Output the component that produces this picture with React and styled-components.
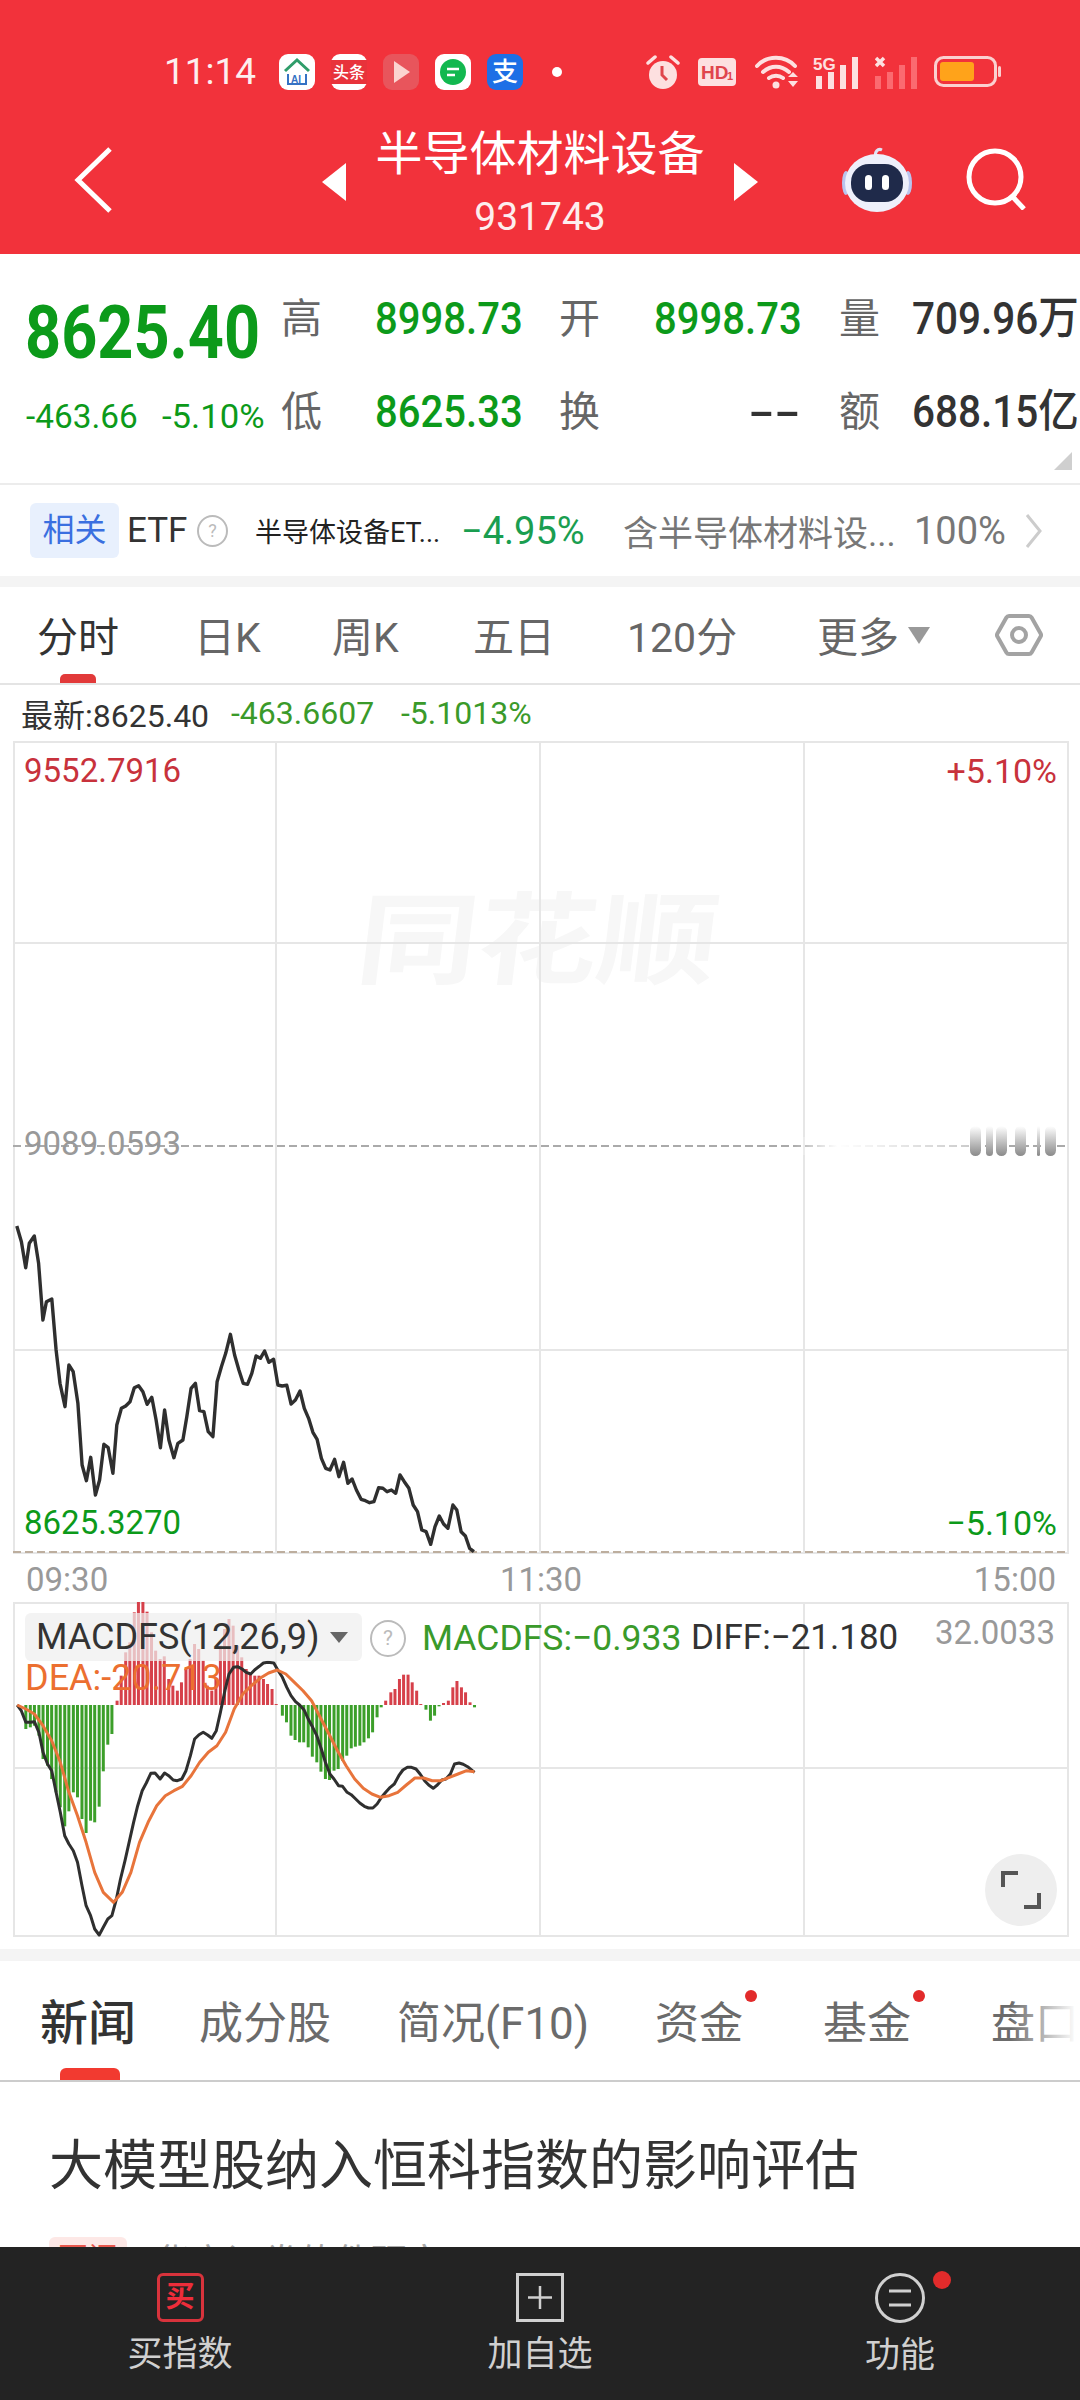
import React from 'react'
import styled, { createGlobalStyle } from 'styled-components'

const Global = createGlobalStyle`
  html, body { margin: 0; padding: 0; background: #fff; }
  * { box-sizing: border-box; }
`

const FONT = `Roboto, "Noto Sans CJK SC", sans-serif`
const GREEN = '#0c9a1a'

const Page = styled.div`
  width: 1080px;
  height: 2400px;
  overflow: hidden;
  display: flex;
  flex-direction: column;
  font-family: ${FONT};
  background: #fff;
  color: #333;
`

const Squeeze = styled.span`
  display: inline-block;
  white-space: nowrap;
  transform: scaleX(${p => p.$x || 1});
  transform-origin: ${p => p.$origin || 'left'} center;
`

// header
const Header = styled.header`
  height: 254px;
  background: #f2323b;
  color: #fff;
  display: flex;
  flex-direction: column;
`
const StatusBar = styled.div`
  height: 91px;
  padding: 53px 0 0 164px;
  display: flex;
  align-items: center;
`
const Time = styled.div`
  width: 115px;
  font-size: 37px;
  line-height: 36px;
  color: #fdeeee;
`
const AppIcons = styled.div`
  display: flex;
  gap: 16px;
  width: 367px;
  align-items: center;
`
const Dot = styled.div`
  width: 10px;
  height: 10px;
  border-radius: 50%;
  background: #fff;
  margin-left: 13px;
`
const SysIcons = styled.div`
  display: flex;
  align-items: center;
`
const NavRow = styled.div`
  flex: 1;
  position: relative;
  display: flex;
  align-items: center;
`
const BackIcon = styled.svg`
  margin-left: 74px;
  margin-top: 14px;
`
const TitleBlock = styled.div`
  position: absolute;
  left: 322px;
  width: 436px;
  top: 34px;
  display: flex;
  align-items: center;
  justify-content: space-between;
`
const TitleArrow = styled.svg`
  margin-top: -4px;
`
const TitleText = styled.div`
  text-align: center;
  flex: 1;
`
const Title = styled.div`
  font-size: 47px;
  line-height: 58px;
  color: #fff;
  white-space: nowrap;
`
const Code = styled.div`
  font-size: 39px;
  line-height: 50px;
  color: #fdeeee;
  margin-top: 9px;
`
const NavRight = styled.div`
  margin-left: auto;
  padding-right: 52px;
  display: flex;
  align-items: center;
  gap: 52px;
  margin-top: 13px;
`

// quote panel
const Quote = styled.section`
  position: relative;
  height: 231px;
  border-bottom: 2px solid #ececec;
  padding: 35px 0 0 25px;
  display: grid;
  grid-template-columns: 256px 94px 184px 95px 185px 73px 168px;
  grid-template-rows: 60px 60px;
  row-gap: 33px;
  align-items: center;
  font-size: 45px;
`
const BigPrice = styled.div`
  font-size: 75px;
  font-weight: 700;
  color: ${GREEN};
  line-height: 60px;
  margin-top: 26px;
`
const Change = styled.div`
  display: flex;
  font-size: 34px;
  color: ${GREEN};
  margin-top: 8px;
  margin-left: 1px;
`
const ChangeCell = styled.div`
  width: ${p => p.$w}px;
`
const QLabel = styled.div`
  font-size: 41px;
  color: #666;
  line-height: 60px;
`
const QValue = styled.div`
  color: ${p => p.$c || GREEN};
  font-weight: 500;
  line-height: 60px;
  white-space: nowrap;
`
const Dash = styled.div`
  color: #333;
  font-weight: 500;
  text-align: right;
  padding-right: 38px;
  line-height: 60px;
`
const Corner = styled.div`
  position: absolute;
  right: 8px;
  bottom: 13px;
  width: 18px;
  height: 18px;
  background: #cfcfcf;
  clip-path: polygon(100% 0, 100% 100%, 0 100%);
`

// etf row
const EtfRow = styled.section`
  height: 91px;
  display: flex;
  align-items: center;
  padding-left: 30px;
  white-space: nowrap;
`
const EtfTag = styled.div`
  width: 89px;
  height: 55px;
  border-radius: 6px;
  background: #e8f0fd;
  color: #3a6fe0;
  font-size: 32px;
  line-height: 55px;
  text-align: center;
`
const EtfName = styled.div`
  margin-left: 8px;
  width: 60px;
  font-size: 35px;
  color: #333;
`
const EtfHelp = styled.div`
  margin-left: 10px;
  width: 31px;
  height: 32px;
  border-radius: 50%;
  border: 2px solid #bbb;
  color: #bbb;
  font-size: 18px;
  line-height: 28px;
  text-align: center;
`
const EtfFund = styled.div`
  margin-left: 27px;
  width: 206px;
  font-size: 27px;
  color: #222;
`
const EtfPct = styled.div`
  width: 162px;
  font-size: 38px;
  color: #1a9e50;
`
const EtfMeta = styled.div`
  font-size: 35px;
  color: #777;
  width: 291px;
`
const EtfShare = styled.div`
  font-size: 38px;
  color: #777;
  width: 111px;
`
const Band = styled.div`
  height: ${p => p.$h}px;
  background: #f4f4f4;
  flex: none;
`
const Spacer = styled.div`
  height: 12px;
  flex: none;
`

// period tabs
const PeriodTabs = styled.nav`
  position: relative;
  height: 98px;
  flex: none;
  border-bottom: 2px solid #e4e4e4;
  display: grid;
  grid-template-columns: 157px 138px 141px 154px 190px 178px 60px;
  padding-left: 37px;
  align-items: center;
  font-size: 41px;
  color: #666;
`
const PeriodTab = styled.div`
  color: ${p => (p.$on ? '#333' : '#666')};
  white-space: nowrap;
  display: flex;
  align-items: center;
  margin-top: -2px;
`
const Caret = styled.i`
  display: inline-block;
  margin-left: 9px;
  margin-top: 2px;
  border-left: 11px solid transparent;
  border-right: 11px solid transparent;
  border-top: 17px solid #999;
`
const PeriodMark = styled.div`
  position: absolute;
  left: 60px;
  bottom: 0;
  width: 36px;
  height: 9px;
  background: #e23a3a;
  border-radius: 5px 5px 0 0;
`
const Latest = styled.div`
  height: 56px;
  flex: none;
  padding-left: 21px;
  display: flex;
  align-items: center;
  font-size: 32px;
  white-space: nowrap;
`
const LatestCell = styled.div`
  width: ${p => p.$w}px;
  color: ${p => p.$c || '#333'};
`

// charts
const ChartBox = styled.div`
  position: relative;
  flex: none;
  margin-left: 13px;
  width: 1057px;
  height: ${p => p.$h}px;
`
const ChartSvg = styled.svg`
  position: absolute;
  left: 0;
  top: 0;
`
const Watermark = styled.div`
  position: absolute;
  left: 345px;
  top: 136px;
  width: 300px;
  font-size: 100px;
  line-height: 130px;
  font-weight: 700;
  color: #f7f7f7;
  white-space: nowrap;
  transform: skewX(-7deg) scaleX(1.2);
  transform-origin: left center;
`
const AxisLabel = styled.div`
  position: absolute;
  ${p => (p.$right ? 'right: 13px;' : 'left: 11px;')}
  top: ${p => p.$top}px;
  font-size: ${p => (p.$right ? 34 : 33)}px;
  line-height: 40px;
  color: ${p => p.$c};
  white-space: nowrap;
`
const TimeAxis = styled.div`
  height: 48px;
  flex: none;
  padding: 2px 24px 0 26px;
  display: flex;
  justify-content: space-between;
  align-items: center;
  font-size: 33px;
  color: #999;
`
const MacdLabel = styled.div`
  position: absolute;
  left: 12px;
  top: 11px;
  width: 337px;
  height: 48px;
  padding-left: 11px;
  border-radius: 6px;
  background: rgba(238, 238, 238, 0.72);
  font-size: 36px;
  line-height: 48px;
  color: #333;
  display: flex;
  align-items: center;
  white-space: nowrap;
`
const MacdCaret = styled.i`
  position: absolute;
  left: 305px;
  top: 19px;
  border-left: 9px solid transparent;
  border-right: 9px solid transparent;
  border-top: 11px solid #666;
`
const HelpMark = styled.div`
  position: absolute;
  left: 357px;
  top: 18px;
  width: 36px;
  height: 37px;
  border-radius: 50%;
  border: 2px solid #bbb;
  color: #bbb;
  font-size: 21px;
  line-height: 33px;
  text-align: center;
`
const MacdValue = styled.div`
  position: absolute;
  left: ${p => p.$l}px;
  top: ${p => p.$t}px;
  font-size: ${p => p.$s || 36}px;
  line-height: 44px;
  color: ${p => p.$c};
  white-space: nowrap;
`
const ExpandBtn = styled.div`
  position: absolute;
  right: 13px;
  bottom: 11px;
  width: 72px;
  height: 72px;
  border-radius: 50%;
  background: #eeeeee;
  display: flex;
  align-items: center;
  justify-content: center;
`

// news
const NewsTabs = styled.nav`
  position: relative;
  height: 121px;
  flex: none;
  border-bottom: 2px solid #cccccc;
  font-size: 44px;
  color: #666;
  white-space: nowrap;
  overflow: hidden;
`
const NewsTab = styled.div`
  position: absolute;
  left: ${p => p.$l}px;
  top: 32px;
  font-size: ${p => (p.$on ? 48 : 44)}px;
  line-height: 62px;
  font-weight: ${p => (p.$on ? 500 : 400)};
  color: ${p => (p.$on ? '#333' : '#6b6b6b')};
`
const RedDot = styled.div`
  position: absolute;
  left: ${p => p.$l}px;
  top: ${p => p.$t}px;
  width: ${p => p.$s}px;
  height: ${p => p.$s}px;
  border-radius: 50%;
  background: #e22b2b;
`
const NewsMark = styled.div`
  position: absolute;
  left: 60px;
  bottom: 0;
  width: 60px;
  height: 12px;
  border-radius: 6px 6px 0 0;
  background: #f23a30;
`
const FadeEdge = styled.div`
  position: absolute;
  right: 0;
  top: 0;
  bottom: 0;
  width: 70px;
  background: linear-gradient(90deg, rgba(255,255,255,0), #fff 95%);
`
const Article = styled.article`
  flex: 1;
  min-height: 0;
  overflow: hidden;
  padding: 50px 0 0 49px;
`
const Headline = styled.h2`
  margin: 0;
  font-size: 54px;
  line-height: 70px;
  font-weight: 400;
  color: #333;
  white-space: nowrap;
`
const Source = styled.div`
  margin-top: 31px;
  display: flex;
  align-items: center;
  gap: 28px;
  font-size: 36px;
  color: #aaa;
  white-space: nowrap;
`
const SourceTag = styled.span`
  width: 78px;
  height: 44px;
  border-radius: 6px;
  background: #fde8e6;
  color: #e8574d;
  font-size: 30px;
  line-height: 44px;
  text-align: center;
`

// bottom bar
const BottomBar = styled.footer`
  position: relative;
  height: 153px;
  flex: none;
  background: #232323;
  display: grid;
  grid-template-columns: repeat(3, 360px);
`
const BottomItem = styled.div`
  position: relative;
  display: flex;
  flex-direction: column;
  align-items: center;
  padding-top: 26px;
  color: #d0d0d0;
  font-size: 35px;
`
const BuyIcon = styled.div`
  width: 47px;
  height: 49px;
  border: 3px solid #d8333c;
  border-radius: 6px;
  color: #ee2d3a;
  font-size: 29px;
  font-weight: 700;
  line-height: 42px;
  text-align: center;
`
const BottomLabel = styled.div`
  margin-top: 10px;
  line-height: 46px;
`

// chart data, traced from the reference
const pricePts = [47,378,60,425,72,503,82,430,96,408,108,490,120,660,130,605,145,597,157,750,168,850,182,920,193,795,205,815,218,910,230,1095,242,1142,254,1072,267,1185,279,1140,291,1033,303,1043,316,1120,327,975,340,925,352,918,364,905,376,863,388,857,400,875,412,913,425,892,437,960,449,1043,461,930,473,1020,487,1073,498,1030,512,1020,523,950,535,865,547,850,559,932,571,935,583,995,596,1010,608,845,620,800,632,760,645,703,657,765,669,810,681,850,693,853,705,820,717,768,729,775,741,753,753,787,766,778,778,855,790,858,803,856,815,912,827,900,840,873,852,925,864,955,876,997,888,1018,900,1075,912,1105,924,1110,937,1078,949,1130,962,1087,974,1150,986,1137,998,1170,1011,1198,1023,1202,1035,1208,1047,1205,1060,1163,1072,1165,1084,1175,1096,1170,1108,1180,1120,1125,1132,1145,1145,1165,1157,1215,1169,1235,1181,1290,1193,1295,1206,1333,1218,1280,1230,1248,1242,1272,1254,1285,1268,1215,1279,1230,1291,1295,1303,1308,1315,1345,1327,1355]
const diffPts = [50,378,62,395,75,430,88,430,100,428,113,460,125,520,138,555,150,575,163,640,175,700,188,770,200,795,213,815,225,850,238,920,250,980,263,1010,275,1050,288,1068,300,1045,313,1020,325,1010,338,960,350,900,363,845,375,790,388,730,400,680,413,635,425,612,438,583,450,582,465,600,478,582,490,590,503,603,515,605,528,600,540,575,553,530,565,480,578,467,590,460,603,468,615,478,628,455,640,400,653,335,665,285,678,265,690,263,703,270,715,280,728,285,740,272,753,262,765,252,778,250,795,252,808,275,820,295,833,325,845,350,858,368,870,378,883,393,895,420,908,445,920,470,933,510,945,550,958,585,970,600,983,620,995,622,1008,640,1020,647,1033,660,1045,672,1058,682,1070,687,1083,687,1095,675,1108,655,1120,640,1133,625,1145,615,1158,590,1170,573,1183,565,1195,565,1208,570,1220,585,1233,605,1245,618,1258,628,1270,618,1283,603,1295,600,1308,585,1320,555,1333,552,1345,556,1358,563,1378,580]
const deaPts = [50,378,75,390,100,405,125,440,150,485,175,550,200,640,225,710,250,790,275,880,300,940,330,970,355,940,380,880,405,790,430,730,455,680,480,650,505,635,530,622,555,590,580,550,605,520,630,500,655,460,680,390,705,345,730,320,755,298,780,282,805,273,830,285,855,310,880,335,905,365,930,415,955,465,980,515,1005,560,1030,600,1055,628,1080,645,1105,655,1130,650,1155,640,1180,618,1205,597,1230,597,1255,605,1280,605,1305,595,1330,585,1355,575,1378,578]
const barPts = [75,450,88,445,100,440,113,470,125,540,138,560,150,600,163,640,175,685,188,742,200,697,213,640,225,655,238,720,250,762,263,725,275,730,288,683,300,577,313,497,325,465,340,365,352,290,365,220,377,190,390,100,402,68,415,68,427,98,440,160,452,215,465,240,477,232,490,300,502,320,515,335,527,310,540,270,552,240,565,195,577,210,590,245,602,320,615,335,627,300,640,200,652,150,665,120,677,140,690,200,702,235,715,270,727,285,740,290,752,290,765,300,777,315,790,330,802,375,820,410,832,430,845,470,857,483,870,490,882,490,895,505,907,533,920,550,932,578,945,600,957,603,970,575,982,570,995,545,1007,530,1020,508,1032,503,1045,500,1057,490,1070,478,1082,460,1095,415,1107,385,1120,365,1135,340,1147,330,1160,300,1172,287,1185,287,1197,310,1210,335,1222,375,1237,392,1250,425,1262,410,1275,382,1288,372,1302,365,1315,325,1327,306,1340,325,1352,340,1365,370,1378,385]

const toLine = (pts, sx, ox, sy, oy) => {
  let out = []
  for (let i = 0; i < pts.length; i += 2) {
    out.push(`${(pts[i] / sx - ox).toFixed(1)},${(oy + pts[i + 1] / sy).toFixed(1)}`)
  }
  return out.join(' ')
}
const MACD_SX = 2.904
const MACD_OY = 1580 - 1603

const macdBars = []
for (let i = 0; i < barPts.length; i += 2) {
  const x = barPts[i] / MACD_SX - 13
  const end = barPts[i + 1] / 3 + MACD_OY
  const zero = 378 / 3 + MACD_OY
  macdBars.push({ x, y: Math.min(end, zero), h: Math.abs(end - zero), up: end < zero })
}

const blurBars = [[957, 11], [973, 7], [983, 11], [1002, 11], [1024, 3], [1032, 11]]

function AppIcon({ bg, children }) {
  return (
    <svg width="36" height="36" viewBox="0 0 36 36">
      <rect width="36" height="36" rx="9" fill={bg} />
      {children}
    </svg>
  )
}

function StatusIcons() {
  return (
    <SysIcons>
      <svg width="34" height="36" viewBox="0 0 34 36">
        <circle cx="17" cy="21" r="14" fill="#fde0e0" />
        <path d="M16 12v9l5 5" fill="none" stroke="#e0454c" strokeWidth="3" />
        <path d="M2 9 9 3M32 9l-7-6" stroke="#fde0e0" strokeWidth="3.5" strokeLinecap="round" />
      </svg>
      <svg width="38" height="28" viewBox="0 0 38 28" style={{ marginLeft: 18 }}>
        <rect width="38" height="28" rx="4" fill="#fde0e0" />
        <text x="3" y="21" fontFamily="Liberation Sans" fontWeight="700" fontSize="19" fill="#e0454c">HD</text>
        <text x="29" y="22" fontFamily="Liberation Sans" fontWeight="700" fontSize="11" fill="#e0454c">1</text>
      </svg>
      <svg width="44" height="34" viewBox="0 0 44 34" style={{ marginLeft: 19 }}>
        <path d="M2 11C12 0 30 0 40 11M8 17c8-7 18-7 26 0M14 23c4-3 10-3 14 0" fill="none" stroke="#fde0e0" strokeWidth="4" strokeLinecap="round" />
        <circle cx="21" cy="30" r="3.5" fill="#fde0e0" />
        <path d="M33 22l5-5 5 5zM33 26h10l-5 6z" fill="#fde0e0" />
      </svg>
      <svg width="48" height="34" viewBox="0 0 48 34" style={{ marginLeft: 14 }}>
        <text x="0" y="15" fontFamily="Liberation Sans" fontWeight="700" fontSize="17" fill="#fde0e0">5G</text>
        <path d="M3 21h6v13H3zM15 17h6v17h-6zM27 10h6v24h-6zM39 2h6v32h-6z" fill="#fde0e0" />
      </svg>
      <svg width="43" height="34" viewBox="0 0 43 34" style={{ marginLeft: 14 }}>
        <path d="M1 3l8 8M9 3l-8 8" stroke="#fde0e0" strokeWidth="3.5" />
        <path d="M0 21h6v13H0zM12 17h6v17h-6zM24 10h6v24h-6zM36 2h6v32h-6z" fill="#fb6a70" />
      </svg>
      <svg width="68" height="32" viewBox="0 0 68 32" style={{ marginLeft: 16 }}>
        <rect x="1.5" y="1.5" width="60" height="28" rx="8" fill="none" stroke="#fbd0d0" strokeWidth="3" />
        <rect x="6" y="6" width="34" height="19" rx="3" fill="#ffa31a" />
        <rect x="64" y="10" width="3" height="11" rx="1.5" fill="#fbd0d0" />
      </svg>
    </SysIcons>
  )
}

function PriceChart() {
  return (
    <ChartBox $h={813}>
      <Watermark>同花顺</Watermark>
      <ChartSvg width="1057" height="813" viewBox="0 0 1057 813">
        <defs>
          <linearGradient id="fadeDash" x1="0" x2="1" y1="0" y2="0">
            <stop offset="0" stopColor="#fff" stopOpacity="0" />
            <stop offset="0.25" stopColor="#fff" />
            <stop offset="1" stopColor="#fff" stopOpacity="0.4" />
          </linearGradient>
          <linearGradient id="blurBar" x1="0" x2="0" y1="0" y2="1">
            <stop offset="0" stopColor="#fff" />
            <stop offset="1" stopColor="#8a8a8a" />
          </linearGradient>
        </defs>
        <g stroke="#e6e6e6" strokeWidth="2" fill="none">
          <rect x="1" y="1" width="1054" height="811" />
          <path d="M263 0v813M527 0v813M791 0v813M0 202h1056M0 609h1056" />
        </g>
        <path d="M0 405h1056" stroke="#aaa" strokeWidth="2" strokeDasharray="8 4" />
        <rect x="780" y="396" width="177" height="18" fill="url(#fadeDash)" />
        {blurBars.map(([x, w]) => (
          <rect key={x} x={x} y="385" width={w} height="30" rx={w / 2} fill="url(#blurBar)" />
        ))}
        <path d="M0 811h1056" stroke="#bdae9e" strokeWidth="2" strokeDasharray="8 4" />
        <polyline points={toLine(pricePts, 2.8, 13, 3, 1100 - 741)} fill="none" stroke="#2f2f2f" strokeWidth="3.4" strokeLinejoin="round" />
      </ChartSvg>
      <AxisLabel $top={10} $c="#c8323c">9552.7916</AxisLabel>
      <AxisLabel $top={10} $right $c="#c8323c">+5.10%</AxisLabel>
      <AxisLabel $top={383} $c="#999">9089.0593</AxisLabel>
      <AxisLabel $top={762} $c={GREEN}>8625.3270</AxisLabel>
      <AxisLabel $top={762} $right $c={GREEN}>−5.10%</AxisLabel>
    </ChartBox>
  )
}

function MacdChart() {
  return (
    <ChartBox $h={335}>
      <ChartSvg width="1057" height="335" viewBox="0 0 1057 335">
        <g stroke="#e6e6e6" strokeWidth="2" fill="none">
          <rect x="1" y="1" width="1054" height="333" />
          <path d="M263 0v335M527 0v335M791 0v335M0 166h1056" />
        </g>
        {macdBars.map(b => (
          <rect key={b.x} x={b.x - 1.5} y={b.y} width="3" height={Math.max(b.h, 1)} fill={b.up ? '#d6404a' : '#3c9f2a'} />
        ))}
        <polyline points={toLine(diffPts, MACD_SX, 13, 3, MACD_OY)} fill="none" stroke="#2f2f2f" strokeWidth="3" strokeLinejoin="round" />
        <polyline points={toLine(deaPts, MACD_SX, 13, 3, MACD_OY)} fill="none" stroke="#e8743b" strokeWidth="3" strokeLinejoin="round" />
      </ChartSvg>
      <MacdLabel>
        MACDFS(12,26,9)
        <MacdCaret />
      </MacdLabel>
      <HelpMark>?</HelpMark>
      <MacdValue $l={409} $t={14} $s={35.5} $c="#3a9a2a">MACDFS:−0.933</MacdValue>
      <MacdValue $l={678} $t={14} $s={35} $c="#333">DIFF:−21.180</MacdValue>
      <MacdValue $l={922} $t={9} $s={33} $c="#999">32.0033</MacdValue>
      <MacdValue $l={12} $t={54} $c="#ec6f30">DEA:-20.713</MacdValue>
      <ExpandBtn>
        <svg width="40" height="40" viewBox="0 0 40 40">
          <path d="M2 17V3h15M38 23v14H23" fill="none" stroke="#555" strokeWidth="4" />
        </svg>
      </ExpandBtn>
    </ChartBox>
  )
}

export default function App() {
  return (
    <Page>
      <Global />
      <Header>
        <StatusBar>
          <Time>11:14</Time>
          <AppIcons>
            <AppIcon bg="#fff">
              <path d="M6 17 18 6l12 11" fill="none" stroke="#2f9d6a" strokeWidth="3" />
              <path d="M9 20v10h18V20" fill="none" stroke="#3572c4" strokeWidth="2" />
              <text x="12" y="29" fontSize="10" fontFamily="Liberation Sans" fontWeight="700" fill="#3572c4">AI</text>
            </AppIcon>
            <AppIcon bg="#fff">
              <rect y="6" width="36" height="24" fill="#e8333b" />
              <text x="2" y="24" fontSize="16" fontFamily="Noto Sans CJK SC" fontWeight="500" fill="#fff">头条</text>
            </AppIcon>
            <AppIcon bg="#e8555c">
              <path d="M11 7v22l16-11z" fill="#fbd4d0" />
            </AppIcon>
            <AppIcon bg="#fff">
              <circle cx="18" cy="18" r="13" fill="#12b84f" />
              <path d="M12 15h12M12 21h8" stroke="#fff" strokeWidth="2.5" />
            </AppIcon>
            <AppIcon bg="#1d6fe6">
              <text x="5" y="27" fontSize="26" fontFamily="Noto Sans CJK SC" fontWeight="500" fill="#fff">支</text>
            </AppIcon>
            <Dot />
          </AppIcons>
          <StatusIcons />
        </StatusBar>
        <NavRow>
          <BackIcon width="40" height="66" viewBox="0 0 40 66">
            <path d="M36 2 4 33l32 31" fill="none" stroke="#fff" strokeWidth="5" />
          </BackIcon>
          <TitleBlock>
            <TitleArrow width="24" height="38" viewBox="0 0 24 38"><path d="M24 0v38L0 19z" fill="#fff" /></TitleArrow>
            <TitleText>
              <Title>半导体材料设备</Title>
              <Code>931743</Code>
            </TitleText>
            <TitleArrow width="24" height="38" viewBox="0 0 24 38"><path d="M0 0v38l24-19z" fill="#fff" /></TitleArrow>
          </TitleBlock>
          <NavRight>
            <svg width="74" height="68" viewBox="0 0 74 68">
              <path d="M36 12c-2-5 2-9 6-7" fill="none" stroke="#dfe3f5" strokeWidth="3" />
              <ellipse cx="6" cy="38" rx="4" ry="12" fill="#b9c4ee" />
              <ellipse cx="68" cy="38" rx="4" ry="12" fill="#b9c4ee" />
              <ellipse cx="37" cy="38" rx="32" ry="29" fill="#eef0fb" />
              <rect x="11" y="19" width="52" height="38" rx="18" fill="#1f2a4a" />
              <rect x="25" y="30" width="7" height="15" rx="3.5" fill="#fff" />
              <rect x="42" y="30" width="7" height="15" rx="3.5" fill="#fff" />
            </svg>
            <svg width="62" height="62" viewBox="0 0 62 62">
              <circle cx="29" cy="29" r="26" fill="none" stroke="#fff" strokeWidth="5" />
              <path d="M46 48l12 13" stroke="#fff" strokeWidth="5" />
            </svg>
          </NavRight>
        </NavRow>
      </Header>

      <Quote>
        <BigPrice><Squeeze $x={0.84}>8625.40</Squeeze></BigPrice>
        <QLabel>高</QLabel>
        <QValue><Squeeze $x={0.89}>8998.73</Squeeze></QValue>
        <QLabel>开</QLabel>
        <QValue><Squeeze $x={0.89}>8998.73</Squeeze></QValue>
        <QLabel>量</QLabel>
        <QValue $c="#333"><Squeeze $x={0.9}>709.96万</Squeeze></QValue>
        <Change>
          <ChangeCell $w={136}><Squeeze $x={0.98}>-463.66</Squeeze></ChangeCell>
          <ChangeCell $w={110}><Squeeze $x={1.02}>-5.10%</Squeeze></ChangeCell>
        </Change>
        <QLabel>低</QLabel>
        <QValue><Squeeze $x={0.89}>8625.33</Squeeze></QValue>
        <QLabel>换</QLabel>
        <Dash><Squeeze $x={1.7} $origin="right">--</Squeeze></Dash>
        <QLabel>额</QLabel>
        <QValue $c="#333"><Squeeze $x={0.9}>688.15亿</Squeeze></QValue>
        <Corner />
      </Quote>

      <EtfRow>
        <EtfTag>相关</EtfTag>
        <EtfName>ETF</EtfName>
        <EtfHelp>?</EtfHelp>
        <EtfFund>半导体设备ET...</EtfFund>
        <EtfPct>−4.95%</EtfPct>
        <EtfMeta>含半导体材料设...</EtfMeta>
        <EtfShare>100%</EtfShare>
        <svg width="18" height="34" viewBox="0 0 18 34">
          <path d="M2 1l13 16L2 33" fill="none" stroke="#ccc" strokeWidth="3" />
        </svg>
      </EtfRow>
      <Band $h={11} />

      <PeriodTabs>
        <PeriodTab $on>分时</PeriodTab>
        <PeriodTab>日K</PeriodTab>
        <PeriodTab>周K</PeriodTab>
        <PeriodTab>五日</PeriodTab>
        <PeriodTab>120分</PeriodTab>
        <PeriodTab>更多<Caret /></PeriodTab>
        <svg width="48" height="44" viewBox="0 0 48 44">
          <path d="M14 3h20a3 3 0 0 1 2.6 1.5l9 16a3 3 0 0 1 0 3l-9 16a3 3 0 0 1-2.6 1.5H14a3 3 0 0 1-2.6-1.5l-9-16a3 3 0 0 1 0-3l9-16A3 3 0 0 1 14 3z" fill="none" stroke="#a3a3a3" strokeWidth="4" />
          <circle cx="24" cy="22" r="7" fill="none" stroke="#a3a3a3" strokeWidth="4" />
        </svg>
        <PeriodMark />
      </PeriodTabs>

      <Latest>
        <LatestCell $w={210}>最新:8625.40</LatestCell>
        <LatestCell $w={170} $c="#3a9a2a">-463.6607</LatestCell>
        <LatestCell $w={150} $c="#3a9a2a">-5.1013%</LatestCell>
      </Latest>

      <PriceChart />
      <TimeAxis>
        <span>09:30</span>
        <span>11:30</span>
        <span>15:00</span>
      </TimeAxis>
      <MacdChart />
      <Spacer />
      <Band $h={12} />

      <NewsTabs>
        <NewsTab $on $l={40}>新闻</NewsTab>
        <NewsTab $l={199}>成分股</NewsTab>
        <NewsTab $l={397}>简况(F10)</NewsTab>
        <NewsTab $l={655}>资金</NewsTab>
        <RedDot $l={745} $t={29} $s={12} />
        <NewsTab $l={823}>基金</NewsTab>
        <RedDot $l={913} $t={29} $s={12} />
        <NewsTab $l={991}>盘口</NewsTab>
        <FadeEdge />
        <NewsMark />
      </NewsTabs>
      <Article>
        <Headline>大模型股纳入恒科指数的影响评估</Headline>
        <Source>
          <SourceTag>要闻</SourceTag>
          华安证券软件研究
        </Source>
      </Article>

      <BottomBar>
        <BottomItem>
          <BuyIcon>买</BuyIcon>
          <BottomLabel>买指数</BottomLabel>
        </BottomItem>
        <BottomItem>
          <svg width="48" height="49" viewBox="0 0 48 49">
            <rect x="1.5" y="1.5" width="45" height="46" fill="none" stroke="#d0d0d0" strokeWidth="3" />
            <path d="M24 13v23M12 24.5h24" stroke="#d0d0d0" strokeWidth="2.5" />
          </svg>
          <BottomLabel>加自选</BottomLabel>
        </BottomItem>
        <BottomItem>
          <svg width="50" height="50" viewBox="0 0 50 50">
            <circle cx="25" cy="25" r="23.5" fill="none" stroke="#d0d0d0" strokeWidth="3" />
            <path d="M14 18h22M14 32h22" stroke="#d0d0d0" strokeWidth="3" />
          </svg>
          <BottomLabel>功能</BottomLabel>
          <RedDot $l={213} $t={24} $s={18} />
        </BottomItem>
      </BottomBar>
    </Page>
  )
}
